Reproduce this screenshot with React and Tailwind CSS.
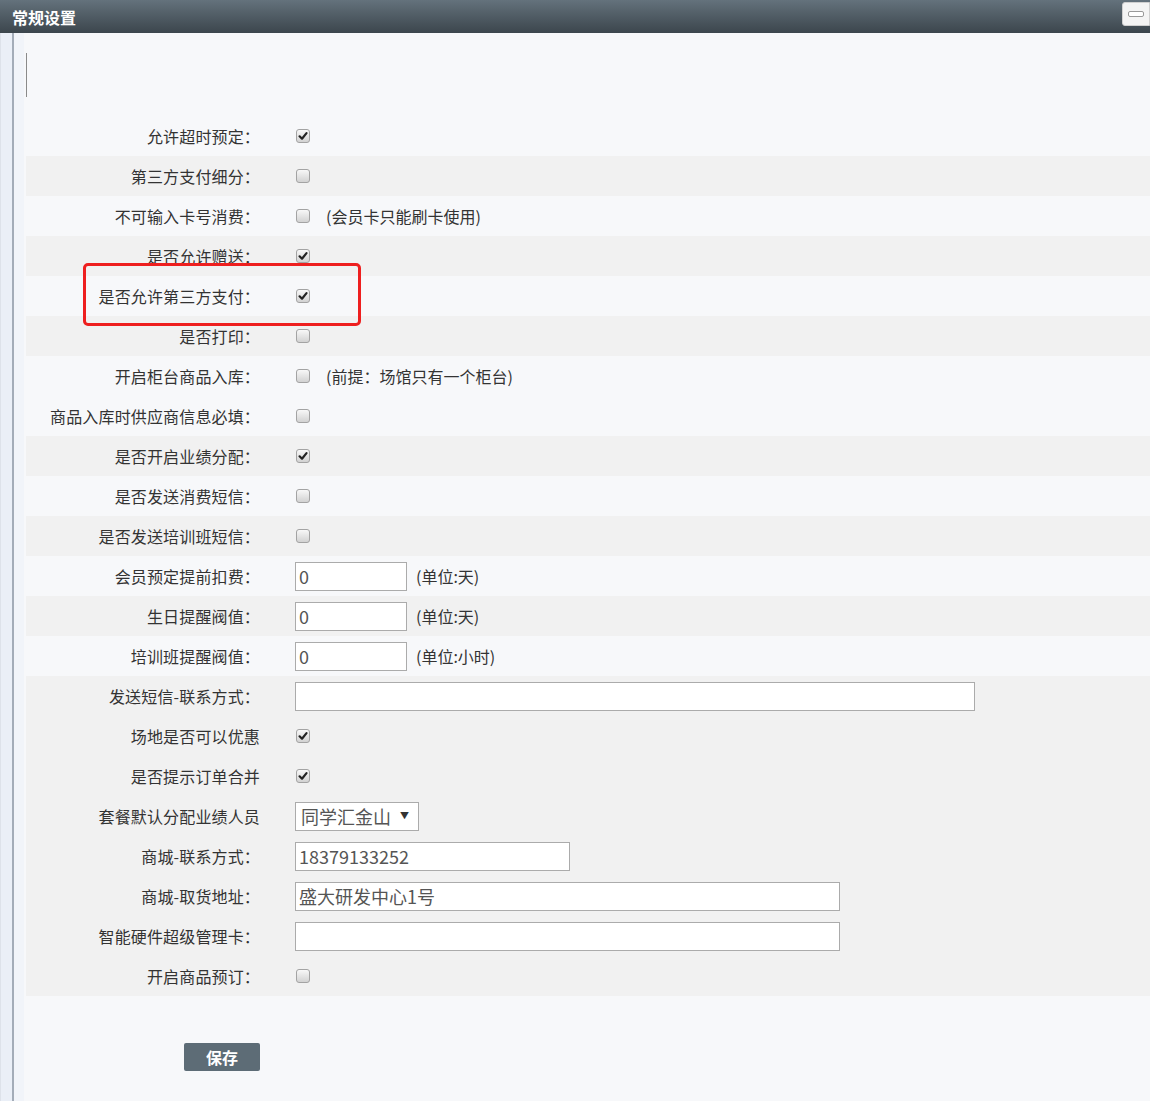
import React from "react";

const FONT = { fontFamily: '"Noto Sans CJK SC", "Noto Sans", sans-serif' };

function Check({ checked }) {
  return (
    <div className="ml-px w-[14px] h-[14px] rounded-[3px] border border-[#a3a3a3] bg-gradient-to-b from-[#f8f8f8] to-[#d2d2d2] flex items-center justify-center">
      {checked && (
        <svg width="10" height="10" viewBox="0 0 10 10">
          <path d="M1.6 5.3 L4 7.7 L8.5 2.1" fill="none" stroke="#222" strokeWidth="2.2" strokeLinecap="round" strokeLinejoin="round" />
        </svg>
      )}
    </div>
  );
}

function Row({ label, gray, children }) {
  return (
    <div className={`flex h-[40px] items-center ${gray ? "bg-[#f1f1f1]" : ""}`}>
      <div className="w-[234px] shrink-0 text-right text-[16px] leading-[20px] text-[#333] tracking-[0.15px]">{label}</div>
      <div className="ml-[35px] flex items-center">{children}</div>
    </div>
  );
}

function Note({ children, ml = "ml-[16px]" }) {
  return <span className={`${ml} text-[16px] leading-[20px] text-[#333]`}>{children}</span>;
}

function TextBox({ w, value }) {
  return (
    <div className={`${w} h-[29px] border border-[#ababab] bg-white flex items-center pl-[3px] text-[18px] leading-[22px] text-[#555]`}>
      {value}
    </div>
  );
}

export default function App() {
  const rows = [
    { l: "允许超时预定：", c: <Check checked /> },
    { l: "第三方支付细分：", c: <Check /> },
    { l: "不可输入卡号消费：", c: <><Check /><Note ml="ml-[16px]">(会员卡只能刷卡使用)</Note></> },
    { l: "是否允许赠送：", c: <Check checked /> },
    { l: "是否允许第三方支付：", c: <Check checked /> },
    { l: "是否打印：", c: <Check /> },
    { l: "开启柜台商品入库：", c: <><Check /><Note>(前提：场馆只有一个柜台)</Note></> },
    { l: "商品入库时供应商信息必填：", c: <Check /> },
    { l: "是否开启业绩分配：", c: <Check checked /> },
    { l: "是否发送消费短信：", c: <Check /> },
    { l: "是否发送培训班短信：", c: <Check /> },
    { l: "会员预定提前扣费：", c: <><TextBox w="w-[112px]" value="0" /><Note ml="ml-[9px]">(单位:天)</Note></> },
    { l: "生日提醒阀值：", c: <><TextBox w="w-[112px]" value="0" /><Note ml="ml-[9px]">(单位:天)</Note></> },
    { l: "培训班提醒阀值：", c: <><TextBox w="w-[112px]" value="0" /><Note ml="ml-[9px]">(单位:小时)</Note></> },
    { l: "发送短信-联系方式：", c: <TextBox w="w-[680px]" value="" /> },
    { l: "场地是否可以优惠", c: <Check checked /> },
    { l: "是否提示订单合并", c: <Check checked /> },
    {
      l: "套餐默认分配业绩人员",
      c: (
        <div className="w-[124px] h-[29px] border border-[#ababab] bg-white flex items-center pl-[5px] text-[18px] leading-[22px] text-[#555]">
          <span>同学汇金山</span>
          <span className="ml-[9px] text-[9px] leading-[10px] text-[#333]">▼</span>
        </div>
      ),
    },
    { l: "商城-联系方式：", c: <TextBox w="w-[275px]" value="18379133252" /> },
    { l: "商城-取货地址：", c: <TextBox w="w-[545px]" value="盛大研发中心1号" /> },
    { l: "智能硬件超级管理卡：", c: <TextBox w="w-[545px]" value="" /> },
    { l: "开启商品预订：", c: <Check /> },
  ];

  const grayIdx = [1, 3, 5, 8, 10, 12];

  return (
    <div className="relative w-[1150px] h-[1101px] overflow-hidden bg-[#f7f8fa]" style={FONT}>
      {/* header */}
      <div className="h-[33px] bg-gradient-to-b from-[#64727c] to-[#3c464d] flex items-center justify-between pl-[12px]">
        <span className="text-white font-bold text-[16px] leading-[20px]">常规设置</span>
        <div className="w-[28px] h-[24px] mt-[-6px] bg-[#f4f4f4] border border-[#d0d0d0] rounded-l-[3px] flex items-center justify-center">
          <div className="w-[16px] h-[6px] border border-[#999] rounded-[2px] bg-white" />
        </div>
      </div>

      <div className="flex h-[1068px]">
        {/* left frame */}
        <div className="w-[14px] shrink-0 flex">
          <div className="w-[1px] bg-[#dde2ea]" />
          <div className="w-[11px] bg-[#eaeff7]" />
          <div className="w-[2px] bg-[#a3acb8]" />
        </div>
        <div className="w-[10px] shrink-0 bg-[#f1f4f9]" />
        <div className="flex-1 pl-[2px]">
          <div className="h-[83px] pt-[20px]">
            <div className="w-px h-[44px] bg-[#8a8a8a]" />
          </div>
          <div>
            {rows.map((r, i) => (
              <Row key={i} label={r.l} gray={i >= 14 || grayIdx.includes(i)}>
                {r.c}
              </Row>
            ))}
          </div>
          <div className="pl-[158px] pt-[47px]">
            <div className="w-[76px] h-[28px] rounded-[2px] bg-[#5d6c76] flex items-center justify-center text-white font-bold text-[16px] leading-[20px]">
              保存
            </div>
          </div>
        </div>
      </div>

      {/* red annotation box */}
      <div className="absolute left-[83px] top-[263px] w-[278px] h-[63px] border-[3px] border-[#ee1f1f] rounded-[5px]" />
    </div>
  );
}
